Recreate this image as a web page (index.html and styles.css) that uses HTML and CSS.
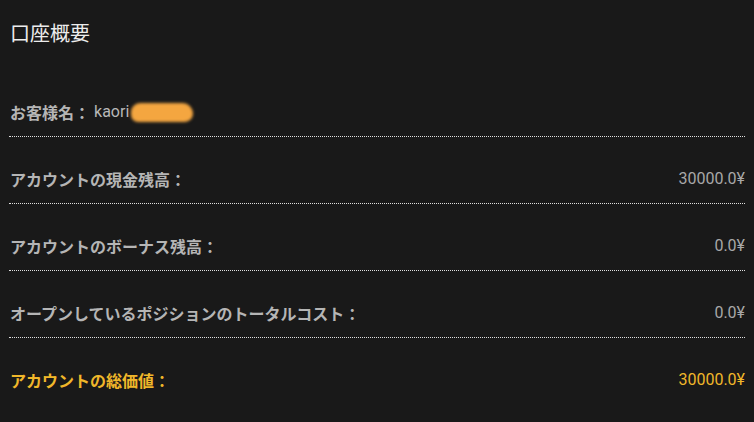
FILE: index.html
```html
<!DOCTYPE html>
<html lang="ja">
<head>
<meta charset="utf-8">
<link rel="stylesheet" href="styles.css">
</head>
<body>
<div class="page">
  <h1 class="title">口座概要</h1>
  <div class="row">
    <span class="label">お客様名：</span>
    <span class="name">kaori<span class="blur"></span></span>
  </div>
  <div class="row">
    <span class="label">アカウントの現金残高：</span>
    <span class="value">30000.0¥</span>
  </div>
  <div class="row">
    <span class="label">アカウントのボーナス残高：</span>
    <span class="value">0.0¥</span>
  </div>
  <div class="row">
    <span class="label">オープンしているポジションのトータルコスト：</span>
    <span class="value">0.0¥</span>
  </div>
  <div class="row total">
    <span class="label">アカウントの総価値：</span>
    <span class="value">30000.0¥</span>
  </div>
</div>
</body>
</html>
```
FILE: styles.css
```css
html, body {
  margin: 0;
  padding: 0;
  background: #191919;
}
body {
  font-family: Roboto, "Noto Sans CJK JP", sans-serif;
  color: #b8b8b8;
}
.page {
  padding: 19px 9px 0 9px;
}
.title {
  margin: 0 0 23px 1px;
  font-family: "Noto Sans CJK JP", sans-serif;
  font-weight: 400;
  font-size: 20px;
  line-height: 28px;
  color: #ececec;
}
.row {
  display: flex;
  justify-content: space-between;
  align-items: center;
  padding: 31px 0 13px 0;
  line-height: 22px;
  border-bottom: 1px dotted #e0e0e0;
}
.label {
  font-family: "Noto Sans CJK JP", sans-serif;
  font-weight: 700;
  font-size: 16px;
  color: #b5b5b5;
  padding-left: 1px;
}
.name {
  flex: 1;
  font-size: 16px;
  color: #b8b8b8;
  padding-left: 4px;
  display: flex;
  align-items: center;
}
.blur {
  display: inline-block;
  width: 62px;
  height: 19px;
  margin-left: 2px;
  background: #f4a640;
  border-radius: 10px 12px 9px 8px;
  filter: blur(1.5px);
}
.value {
  font-size: 16px;
  color: #a8a8a8;
}
.total {
  border-bottom: none;
}
.total .label, .total .value {
  color: #f0b72a;
}
```
